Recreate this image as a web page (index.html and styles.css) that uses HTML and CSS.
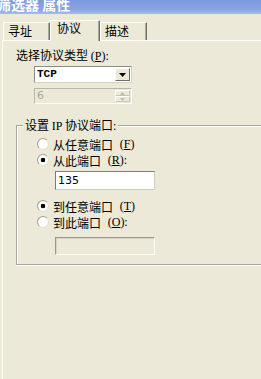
FILE: index.html
```html
<!DOCTYPE html>
<html lang="zh-CN">
<head>
  <meta charset="UTF-8" />
  <title>筛选器 属性</title>
  <link rel="stylesheet" href="styles.css">
</head>
<body>
  <div class="window">
    <div class="titlebar"><span class="title">筛选器 属性</span></div>

    <div class="tabs">
      <div class="tab">寻址</div>
      <div class="tab tab-active">协议</div>
      <div class="tab">描述</div>
    </div>

    <div class="page">
      <div class="field-label">选择协议类型 <span class="key" lang="en">(<u>P</u>):</span></div>

      <div class="combo">
        <span class="combo-value">TCP</span>
        <span class="combo-btn">
          <svg width="7" height="4" viewBox="0 0 7 4"><path d="M0 0h7L3.5 4z" fill="#000"/></svg>
        </span>
      </div>

      <div class="spin">
        <span class="spin-value">6</span>
        <span class="spin-btns">
          <span class="spin-btn"><svg width="5" height="3" viewBox="0 0 5 3"><path d="M2.5 0L5 3H0z" fill="#c0bdae"/></svg></span>
          <span class="spin-btn"><svg width="5" height="3" viewBox="0 0 5 3"><path d="M0 0h5L2.5 3z" fill="#c0bdae"/></svg></span>
        </span>
      </div>

      <fieldset class="group">
        <legend class="group-title">设置 <span class="key" lang="en">IP</span> 协议端口<span class="key" lang="en">:</span></legend>

        <label class="radio"><span class="radio-dot"></span>从任意端口 <span class="key" lang="en">(<u>F</u>)</span></label>
        <label class="radio"><span class="radio-dot checked"></span>从此端口 <span class="key" lang="en">(<u>R</u>):</span></label>
        <div class="text-box">135</div>

        <label class="radio radio-gap"><span class="radio-dot checked"></span>到任意端口 <span class="key" lang="en">(<u>T</u>)</span></label>
        <label class="radio"><span class="radio-dot"></span>到此端口 <span class="key" lang="en">(<u>O</u>):</span></label>
        <div class="text-box text-box-disabled"></div>
      </fieldset>
    </div>
  </div>
</body>
</html>
```

FILE: styles.css
```css
* { margin: 0; padding: 0; box-sizing: border-box; }

:root {
  --face: #ece9d8;
  --shadow: #aca899;
  --dark: #716f64;
  --disabled: #aca899;
}

body {
  background: var(--face);
  font-family: "Noto Sans CJK SC", sans-serif;
  font-size: 12px;
  color: #000;
}

.key {
  font-family: "Liberation Serif", serif;
  font-size: 12px;
}

.window {
  width: 261px;
  height: 379px;
  overflow: hidden;
}

/* title bar, mostly cut off at the top */
.titlebar {
  height: 14px;
  overflow: hidden;
  background: linear-gradient(to bottom, #7d99df 0%, #8aa4e4 70%, #a6bbef 100%);
}

.title {
  display: block;
  margin: -5px 0 0 -3px;
  font-size: 14px;
  font-weight: 700;
  line-height: 18px;
  color: #fff;
  white-space: nowrap;
}

/* tabs */
.tabs {
  height: 26px;
  display: flex;
  align-items: flex-end;
  padding-left: 3px;
}

.tab {
  width: 47px;
  height: 18px;
  padding-left: 4px;
  border-top: 1px solid #fff;
  border-left: 1px solid #fff;
  border-right: 1px solid var(--dark);
  box-shadow: inset -1px 0 0 var(--shadow);
  line-height: 16px;
  background: var(--face);
}

.tab-active {
  position: relative;
  z-index: 1;
  width: 50px;
  height: 21px;
  margin-bottom: -1px;
  padding-left: 6px;
  line-height: 14px;
}

/* tab page */
.page {
  margin-left: 2px;
  height: 339px;
  border-top: 1px solid #fff;
  border-left: 1px solid #fff;
  padding: 7px 0 0 13px;
}

.field-label {
  line-height: 14px;
  height: 14px;
}

.combo,
.spin {
  width: 98px;
  height: 17px;
  margin: 4px 0 0 18px;
  display: flex;
  align-items: stretch;
  border: 1px solid;
  border-color: #8e8d84 #d6d3c4 #d6d3c4 #8e8d84;
  background: #fff;
}

.combo-value {
  flex: 1;
  padding-left: 2px;
  font-family: "Liberation Mono", monospace;
  font-size: 11px;
  font-weight: 700;
  line-height: 15px;
}

.combo-btn {
  width: 15px;
  margin: 1px;
  display: flex;
  align-items: center;
  justify-content: center;
  background: var(--face);
  border: 1px solid;
  border-color: #fff var(--dark) var(--dark) #fff;
}

.spin {
  height: 16px;
  margin-top: 5px;
  background: var(--face);
  border-color: #b9b6a8 #fff #fff #b9b6a8;
}

.spin-value {
  flex: 1;
  padding-left: 2px;
  font-family: "DejaVu Sans", sans-serif;
  font-size: 11px;
  line-height: 14px;
  color: var(--disabled);
}

.spin-btns {
  width: 15px;
  margin: 1px;
  display: flex;
  flex-direction: column;
}

.spin-btn {
  flex: 1;
  display: flex;
  align-items: center;
  justify-content: center;
  border: 1px solid;
  border-color: #fff #c9c6b8 #c9c6b8 #fff;
}

/* group box */
.group {
  width: 300px;
  margin-top: 15px;
  padding: 4px 0 9px 0;
  min-width: 0;
  border: 1px solid var(--shadow);
  box-shadow: inset 1px 1px 0 #fff, 0 1px 0 #fff;
}

.group-title {
  margin-left: 6px;
  padding: 0 2px;
  line-height: 12px;
  background: var(--face);
}

.radio {
  height: 16px;
  display: flex;
  align-items: center;
  gap: 4px;
  padding-left: 20px;
  white-space: pre;
}

.radio-gap {
  margin-top: 8px;
}

.radio-dot {
  width: 12px;
  height: 12px;
  border-radius: 50%;
  border: 1px solid;
  border-color: #a3a196 #e4e2d6 #e4e2d6 #a3a196;
  background: radial-gradient(circle, #fff 55%, #f1efe6 100%);
}

.radio-dot.checked {
  background: radial-gradient(circle, #000 0 2px, #fff 2.6px 55%, #f1efe6 100%);
}

.text-box {
  width: 100px;
  height: 19px;
  margin: 3px 0 0 38px;
  padding-left: 2px;
  border: 1px solid;
  border-color: #7d7c74 #d0cdc0 #d0cdc0 #7d7c74;
  background: #fff;
  font-family: "DejaVu Sans", sans-serif;
  font-size: 11px;
  line-height: 17px;
}

.text-box-disabled {
  height: 18px;
  margin-top: 7px;
  background: var(--face);
  border-color: #9b998f #fff #fff #9b998f;
  box-shadow: inset 1px 1px 0 #d6d3c4;
}
```
